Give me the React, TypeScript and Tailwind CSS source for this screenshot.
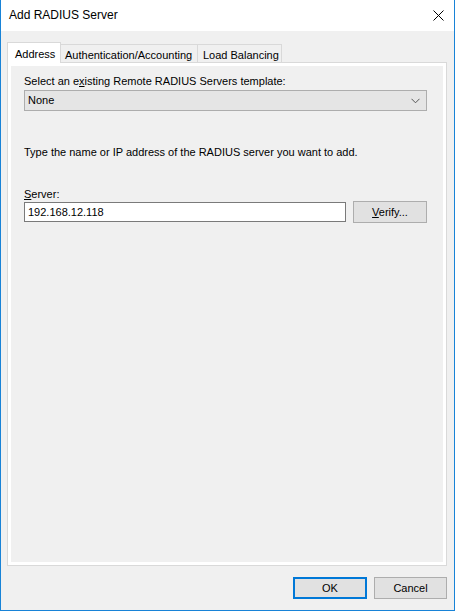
import React from "react";

export default function App() {
  return (
    <div
      className="w-[455px] h-[611px] flex flex-col bg-[#f0f0f0] border-l border-r border-b border-[#1883d7] text-black text-[11px] leading-[13px]"
      style={{ fontFamily: '"Liberation Sans", Arial, sans-serif' }}
    >
      {/* Title bar */}
      <div className="h-[31px] shrink-0 bg-white flex items-center justify-between pl-[8px] pr-[10px]">
        <span className="text-[12px] leading-[15px] mt-[-1px]">Add RADIUS Server</span>
        <svg width="11" height="11" viewBox="0 0 11 11" className="mt-[-1px]">
          <path d="M0.5 0.5 L10.5 10.5 M10.5 0.5 L0.5 10.5" stroke="#000" strokeWidth="1" fill="none" />
        </svg>
      </div>

      {/* Tabs */}
      <div className="mt-[11px] h-[20px] shrink-0 flex items-end pl-[6px] whitespace-nowrap">
        <div className="relative z-10 h-[21px] mb-[-1px] bg-white border-l border-t border-r border-[#d9d9d9] px-[7px] pt-[5px] w-[54px]">
          Address
        </div>
        <div className="h-[18px] bg-[#f0f0f0] border-t border-r border-[#d9d9d9] px-[4px] pt-[4px] w-[137px]">
          Authentication/Accounting
        </div>
        <div className="h-[18px] bg-[#f0f0f0] border-t border-r border-[#d9d9d9] px-[5px] pt-[4px] w-[84px]">
          Load Balancing
        </div>
      </div>

      {/* Tab panel */}
      <div className="flex-1 ml-[6px] mr-[7px] border border-[#d9d9d9] bg-white p-[3px] flex">
        <div className="flex-1 bg-[#f0f0f0] pl-[13px] pr-[16px] pt-[9px] flex flex-col">
          <div>
            Select an e<u>x</u>isting Remote RADIUS Servers template:
          </div>
          <div className="mt-[2px] h-[21px] border border-[#adadad] bg-[#e5e5e5] flex items-center justify-between pl-[3px] pr-[6px]">
            <span>None</span>
            <svg width="9" height="6" viewBox="0 0 9 6">
              <path d="M0.5 0.8 L4.5 4.8 L8.5 0.8" stroke="#555" strokeWidth="1" fill="none" />
            </svg>
          </div>

          <div className="mt-[35px]">
            Type the name or IP address of the RADIUS server you want to add.
          </div>

          <div className="mt-[29px]">
            <u>S</u>erver:
          </div>
          <div className="flex items-center gap-[7px]">
            <div className="w-[322px] h-[20px] border border-[#7a7a7a] bg-white flex items-center pl-[3px]">
              192.168.12.118
            </div>
            <div className="w-[74px] h-[22px] border border-[#adadad] bg-[#e1e1e1] flex items-center justify-center">
              <span>
                <u>V</u>erify...
              </span>
            </div>
          </div>
        </div>
      </div>

      {/* Bottom buttons */}
      <div className="mt-[11px] mb-[11px] h-[22px] shrink-0 flex justify-end gap-[7px] pr-[7px]">
        <div className="w-[74px] h-[22px] border-2 border-[#0078d7] bg-[#e1e1e1] flex items-center justify-center">
          OK
        </div>
        <div className="w-[73px] h-[22px] border border-[#adadad] bg-[#e1e1e1] flex items-center justify-center">
          Cancel
        </div>
      </div>
    </div>
  );
}
